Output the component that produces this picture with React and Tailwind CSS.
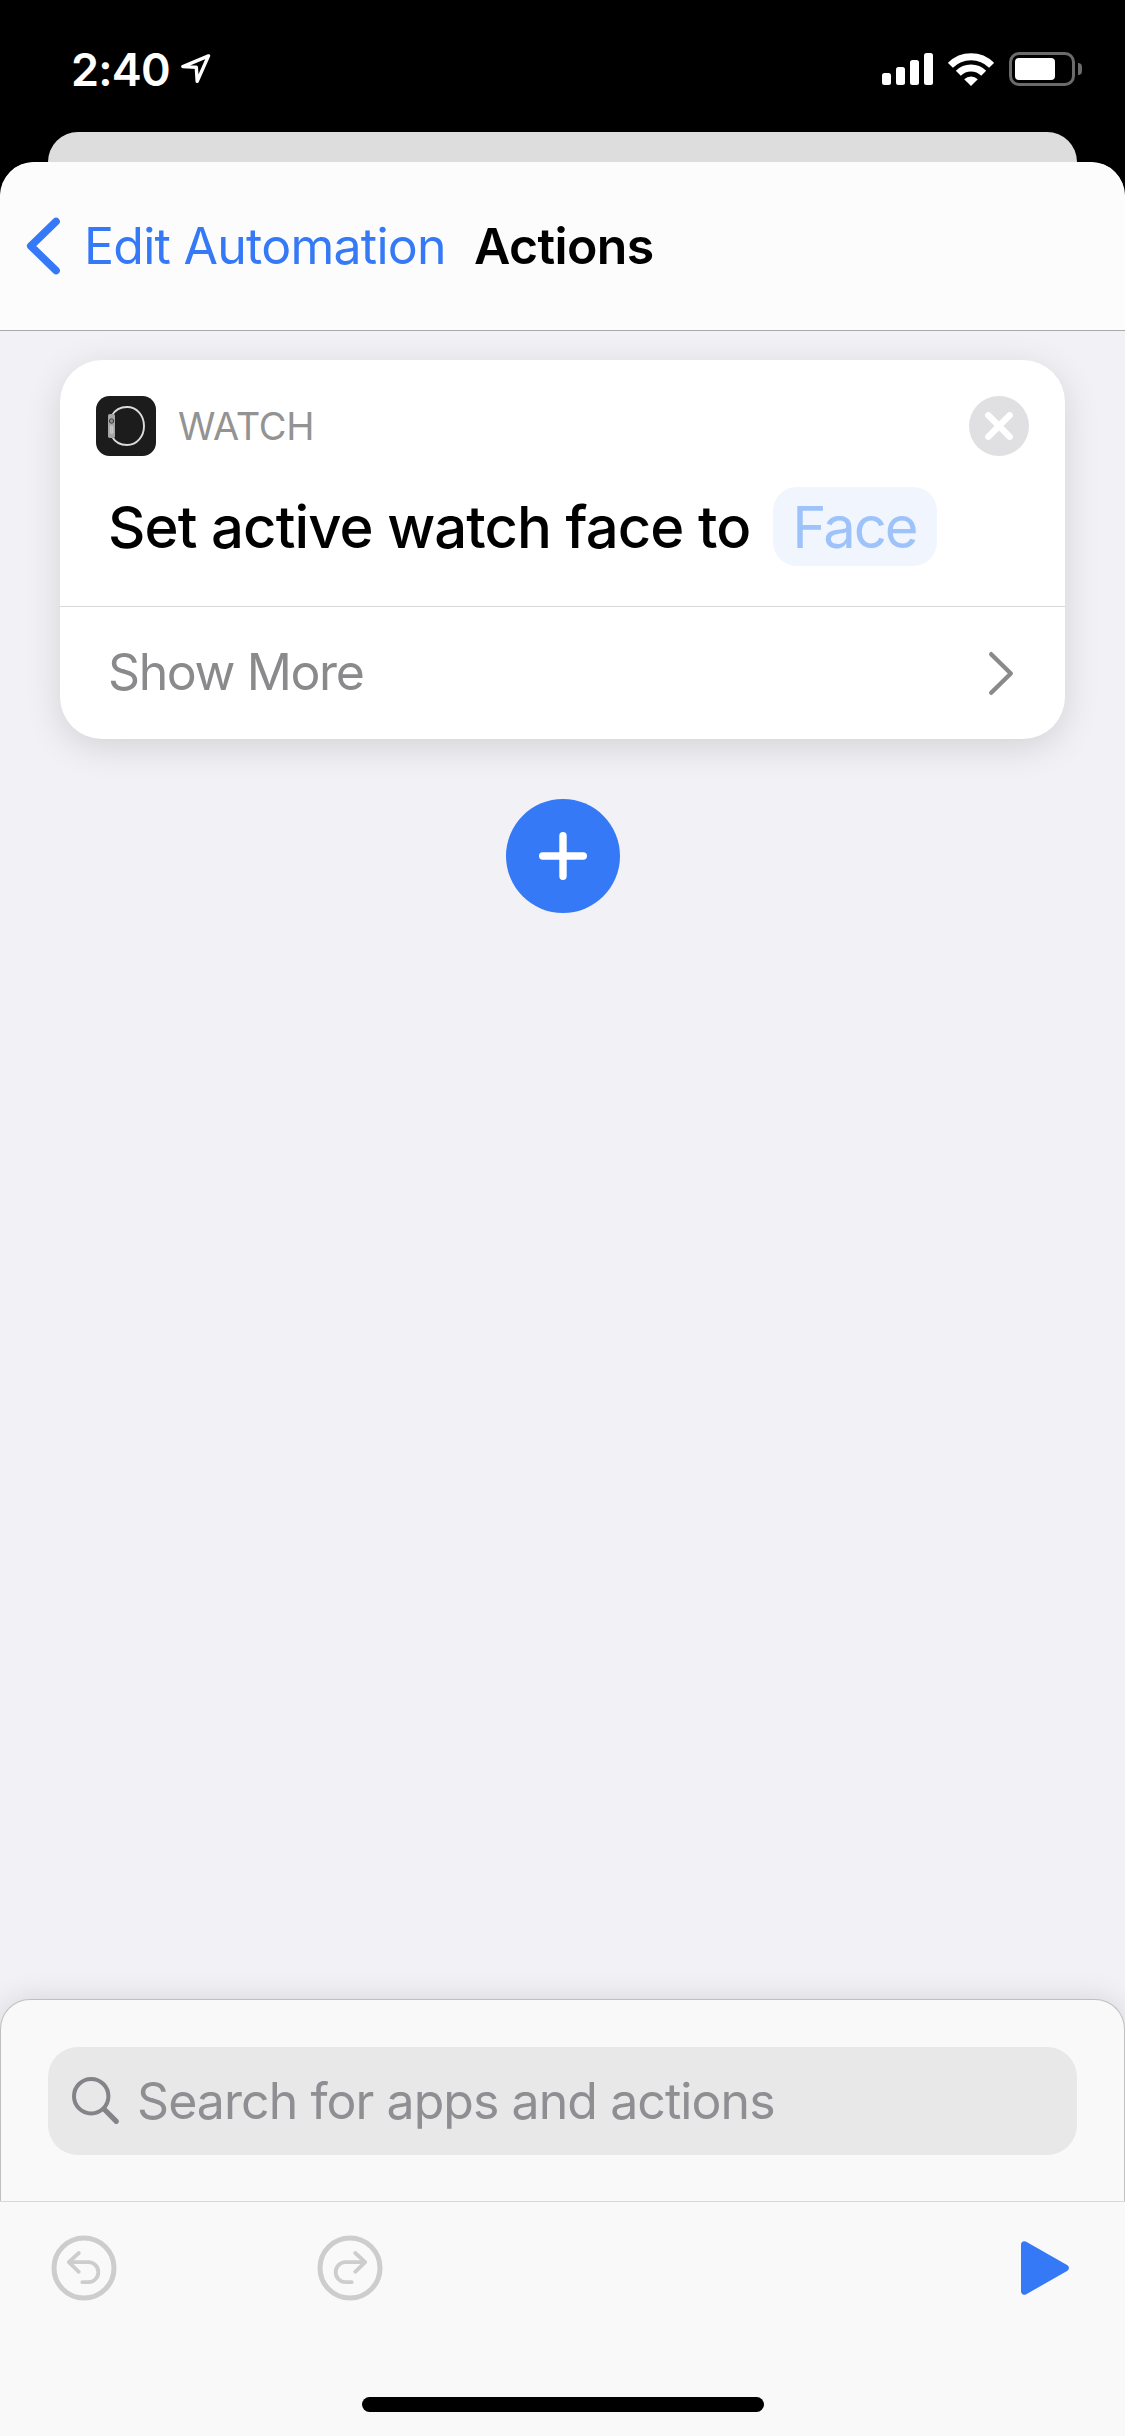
function StatusBar() {
  return (
    <div className="flex h-[132px] items-center justify-between pt-[6px] pr-[43px] pl-[71px] text-white">
      <div className="flex items-center gap-[11px]">
        <span className="text-[45px] leading-none font-semibold tracking-[-0.8px]">2:40</span>
        <svg width="30" height="30" viewBox="0 0 30 30" fill="none" stroke="currentColor" strokeWidth="3.4" strokeLinejoin="round">
          <path d="M27.5 1.9 L1.9 12.6 L15.3 13.2 L16.2 27.4 Z" />
        </svg>
      </div>
      <div className="flex items-center gap-[15px]">
        <div className="flex h-8 items-end gap-[5px]">
          <span className="h-3 w-[9px] rounded-[2.5px] bg-white" />
          <span className="h-[18px] w-[9px] rounded-[2.5px] bg-white" />
          <span className="h-[25px] w-[9px] rounded-[2.5px] bg-white" />
          <span className="h-8 w-[9px] rounded-[2.5px] bg-white" />
        </div>
        <svg width="46" height="33" viewBox="0 0 46 33">
          <g fill="none" stroke="currentColor" strokeWidth="7">
            <path d="M2.4 12.4 A29.1 29.1 0 0 1 43.6 12.4" />
            <path d="M10.3 20.3 A18 18 0 0 1 35.7 20.3" />
          </g>
          <path d="M23 33 L16.2 26.2 A9.8 9.8 0 0 1 29.8 26.2 Z" fill="currentColor" />
        </svg>
        <div className="flex items-center gap-[3px]">
          <div className="h-[34px] w-[66px] rounded-[10px] border-[3px] border-[#6b6b6b] p-[3px]">
            <div className="h-[22px] w-10 rounded-[4px] bg-white" />
          </div>
          <div className="h-3 w-1 rounded-r-full bg-[#6b6b6b]" />
        </div>
      </div>
    </div>
  );
}

function NavBar() {
  return (
    <header className="flex h-[169px] items-center rounded-t-[34px] border-b border-[#a9a9ad] bg-[#fcfcfc] pl-[26px] text-[50px] leading-none">
      <button type="button" className="flex items-center gap-6 text-[#3579f6]">
        <svg width="34" height="58" viewBox="0 0 34 58" fill="none" stroke="currentColor" strokeWidth="7.6" strokeLinecap="round" strokeLinejoin="round">
          <path d="M30 4.5 L4.8 29 L30 53.5" />
        </svg>
        <span className="tracking-[-0.74px]">Edit Automation</span>
      </button>
      <h1 className="ml-[28px] font-semibold tracking-[-0.6px]">Actions</h1>
    </header>
  );
}

function WatchIcon() {
  return (
    <svg width="60" height="60" viewBox="0 0 60 60">
      <rect width="60" height="60" rx="13.5" fill="#1c1c1c" />
      <path d="M16 19.5 C19 14 24.5 11 31 11 C41 11 48 19.5 48 30 C48 40.5 41 49 31 49 C24.5 49 19 46 16 40.5" fill="none" stroke="#dcdcdc" strokeWidth="1.9" />
      <rect x="12" y="18" width="7" height="24" rx="1.8" fill="#a5a7a7" />
      <circle cx="15.5" cy="25" r="2.2" fill="#8d8f8f" stroke="#3c3e3e" strokeWidth="1" />
      <rect x="14.3" y="30" width="2.6" height="7.5" rx="1.2" fill="#b9bbbb" stroke="#d8d8d8" strokeWidth="0.7" />
    </svg>
  );
}

function ActionCard() {
  return (
    <section className="mx-[60px] mt-[29px] rounded-[42px] bg-white shadow-[0_8px_36px_rgba(0,0,0,0.13)]">
      <div className="flex items-center px-9 pt-9">
        <WatchIcon />
        <span className="ml-[22px] text-[38px] leading-none tracking-[-0.3px] text-[#939393]">WATCH</span>
        <button type="button" className="ml-auto">
          <svg width="60" height="60" viewBox="0 0 60 60">
            <circle cx="30" cy="30" r="30" fill="#e0e0e2" />
            <path d="M19.3 19.3 L40.7 40.7 M40.7 19.3 L19.3 40.7" stroke="#fff" strokeWidth="6.4" strokeLinecap="round" />
          </svg>
        </button>
      </div>
      <div className="mt-[31px] flex items-center gap-[23px] px-12 pb-10 text-[58px]">
        <span className="leading-none font-medium tracking-[-0.92px] whitespace-nowrap">Set active watch face to</span>
        <button type="button" className="flex h-[79px] w-[164px] items-center rounded-[24px] bg-[#f0f5fe] pl-[19px] leading-none tracking-[-2px] text-[#9ec3fa]">
          Face
        </button>
      </div>
      <button type="button" className="flex h-[133px] w-full items-center justify-between border-t border-[#d8d8da] pr-[51px] pl-12 text-[#8a8a8c]">
        <span className="pb-0.5 text-[50px] leading-none tracking-[-1.4px]">Show More</span>
        <svg width="26" height="45" viewBox="0 0 26 45" fill="none" stroke="currentColor" strokeWidth="4.4" strokeLinecap="round" strokeLinejoin="round">
          <path d="M3.2 3.2 L22.8 22.5 L3.2 41.8" />
        </svg>
      </button>
    </section>
  );
}

function SearchPanel() {
  return (
    <div className="h-[202px] rounded-t-[30px] border-x border-t border-[#c0c0c2] bg-[#f9f9f9] px-[47px] pt-[47px] shadow-[0_0_30px_rgba(0,0,0,0.12)]">
      <div className="flex h-[108px] items-center gap-[17px] rounded-[30px] bg-[#e8e8e8] pl-6">
        <svg width="48" height="48" viewBox="0 0 48 48" fill="none" stroke="#838388" strokeLinecap="round">
          <circle cx="19.2" cy="19.2" r="17.2" strokeWidth="4" />
          <path d="M32 32 L44.3 44.3" strokeWidth="5.2" />
        </svg>
        <span className="text-[50px] leading-none tracking-[-0.94px] text-[#8e8e93]">Search for apps and actions</span>
      </div>
    </div>
  );
}

function UndoIcon({ className }) {
  return (
    <svg className={className} width="66" height="66" viewBox="0 0 66 66" fill="none" stroke="#cdcdcd" strokeWidth="3.8" strokeLinecap="round" strokeLinejoin="round">
      <circle cx="33" cy="33" r="30" strokeWidth="5" />
      <path d="M27.8 18 L17.8 27.2 L27.8 36.8" />
      <path d="M18.5 27.2 H37.5 A9.8 10 0 0 1 37.5 47.2 H31.3" />
    </svg>
  );
}

function Toolbar() {
  return (
    <footer className="flex h-[235px] flex-col items-center justify-between border-t border-[#d8d8da] bg-[#f9f9f9] pt-[33px] pb-6">
      <div className="flex w-full items-center pr-[55px] pl-[51px]">
        <button type="button">
          <UndoIcon />
        </button>
        <button type="button" className="ml-[200px]">
          <UndoIcon className="-scale-x-100" />
        </button>
        <button type="button" className="ml-auto">
          <svg width="50" height="54" viewBox="0 0 50 54" fill="#3579f6" stroke="#3579f6" strokeWidth="7" strokeLinejoin="round">
            <path d="M4.5 3.8 L45.3 27 L4.5 50.2 Z" />
          </svg>
        </button>
      </div>
      <div className="h-[15px] w-[402px] rounded-full bg-black" />
    </footer>
  );
}

export default function App() {
  return (
    <div className="flex h-[2436px] w-[1125px] flex-col overflow-hidden bg-black font-['Inter',sans-serif] text-black">
      <StatusBar />
      <div className="mx-12 h-[30px] rounded-t-[30px] bg-[#dddddd]" />
      <div className="flex flex-1 flex-col overflow-hidden rounded-t-[34px] bg-[#f1f1f6]">
        <NavBar />
        <main className="flex flex-1 flex-col">
          <ActionCard />
          <button type="button" className="mx-auto mt-[60px] flex size-[114px] items-center justify-center rounded-full bg-[#3579f6]">
            <svg width="48" height="48" viewBox="0 0 48 48" stroke="#fff" strokeWidth="7.4" strokeLinecap="round">
              <path d="M24 3.7 V44.3 M3.7 24 H44.3" />
            </svg>
          </button>
        </main>
        <SearchPanel />
        <Toolbar />
      </div>
    </div>
  );
}
